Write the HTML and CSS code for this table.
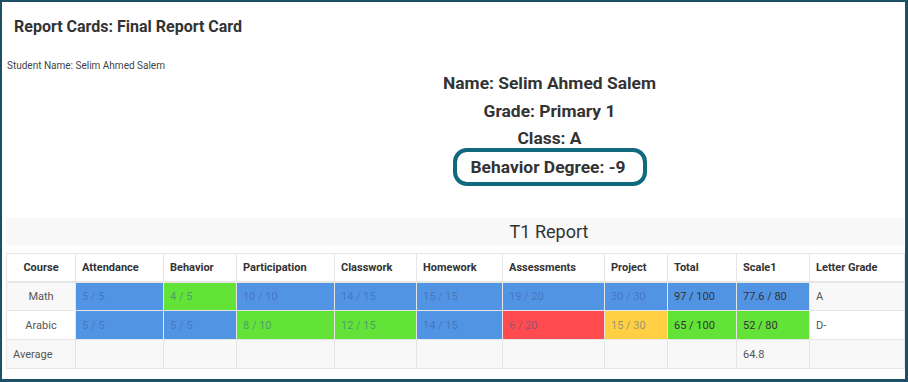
FILE: index.html
```html
<!DOCTYPE html>
<html lang="en">
<head>
<meta charset="utf-8">
<title>Report Cards: Final Report Card</title>
<link rel="stylesheet" href="styles.css">
</head>
<body>
<div class="frame">
  <h1 class="title">Report Cards: Final Report Card</h1>
  <p class="student">Student Name: Selim Ahmed Salem</p>
  <div class="info">
    <div class="info-line">Name: Selim Ahmed Salem</div>
    <div class="info-line">Grade: Primary 1</div>
    <div class="info-line">Class: A</div>
    <div class="info-line behavior-row"><span class="behavior-box">Behavior Degree: -9</span></div>
  </div>
  <div class="term-bar">T1 Report</div>
  <table class="grades">
    <colgroup>
      <col class="w1"><col class="w2"><col class="w3"><col class="w4"><col class="w5"><col class="w6"><col class="w7"><col class="w8"><col class="w9"><col class="w10"><col class="w11">
    </colgroup>
    <thead>
      <tr>
        <th class="course">Course</th>
        <th>Attendance</th>
        <th>Behavior</th>
        <th>Participation</th>
        <th>Classwork</th>
        <th>Homework</th>
        <th>Assessments</th>
        <th>Project</th>
        <th>Total</th>
        <th>Scale1</th>
        <th>Letter Grade</th>
      </tr>
    </thead>
    <tbody>
      <tr class="odd">
        <td class="course">Math</td>
        <td class="blue muted">5 / 5</td>
        <td class="green muted">4 / 5</td>
        <td class="blue muted">10 / 10</td>
        <td class="blue muted">14 / 15</td>
        <td class="blue muted">15 / 15</td>
        <td class="blue muted">19 / 20</td>
        <td class="blue muted">30 / 30</td>
        <td class="blue dark">97 / 100</td>
        <td class="blue dark">77.6 / 80</td>
        <td>A</td>
      </tr>
      <tr class="even">
        <td class="course">Arabic</td>
        <td class="blue muted">5 / 5</td>
        <td class="blue muted">5 / 5</td>
        <td class="green muted">8 / 10</td>
        <td class="green muted">12 / 15</td>
        <td class="blue muted">14 / 15</td>
        <td class="red muted">6 / 20</td>
        <td class="yellow muted">15 / 30</td>
        <td class="green dark">65 / 100</td>
        <td class="green dark">52 / 80</td>
        <td>D-</td>
      </tr>
      <tr class="odd">
        <td class="avg">Average</td>
        <td></td>
        <td></td>
        <td></td>
        <td></td>
        <td></td>
        <td></td>
        <td></td>
        <td></td>
        <td>64.8</td>
        <td></td>
      </tr>
    </tbody>
  </table>
</div>
</body>
</html>
```

FILE: styles.css
```css
html, body {
  margin: 0;
  padding: 0;
  background: #ffffff;
}

body {
  font-family: Roboto, "Liberation Sans", Arial, sans-serif;
  color: #333333;
}

.frame {
  box-sizing: border-box;
  width: 908px;
  height: 382px;
  border-style: solid;
  border-color: #1d4f66;
  border-width: 2px 3px 3px 2px;
  padding: 15px 1px 0 4px;
  overflow: hidden;
}

.title {
  margin: 0 0 0 8px;
  font-size: 16px;
  line-height: 20px;
  font-weight: 700;
  color: #333333;
}

.student {
  margin: 23px 0 0 1px;
  font-size: 10px;
  line-height: 12px;
  color: #444444;
}

.info {
  margin-top: -2px;
  padding-left: 189px;
  text-align: center;
}

.info-line {
  font-size: 17.4px;
  line-height: 27.5px;
  font-weight: 700;
  color: #333333;
}

.behavior-row {
  margin-top: -5px;
}

.behavior-box {
  display: inline-block;
  border: 4px solid #11697f;
  border-radius: 14px;
  padding: 2px 17px 1px 14px;
}

.term-bar {
  margin-top: 32px;
  height: 27px;
  line-height: 27px;
  background: #f8f8f8;
  font-size: 18px;
  color: #333333;
  text-align: center;
  padding-left: 188px;
}

.grades {
  margin-top: 8px;
  width: 898px;
  table-layout: fixed;
  border-collapse: collapse;
  font-size: 11px;
}

.grades col.w1 { width: 69px; }
.grades col.w2 { width: 88px; }
.grades col.w3 { width: 73px; }
.grades col.w4 { width: 98px; }
.grades col.w5 { width: 82px; }
.grades col.w6 { width: 86px; }
.grades col.w7 { width: 102px; }
.grades col.w8 { width: 63px; }
.grades col.w9 { width: 69px; }
.grades col.w10 { width: 73px; }
.grades col.w11 { width: 95px; }

.grades th,
.grades td {
  box-sizing: border-box;
  border: 1px solid #e6e6e6;
  height: 29px;
  padding: 0 6px;
  text-align: left;
  vertical-align: middle;
  white-space: nowrap;
  overflow: hidden;
}

.grades th {
  font-weight: 700;
  color: #333333;
  background: #ffffff;
  border-bottom-width: 2px;
  height: 28px;
}

.grades td {
  color: #555555;
}

.grades .course {
  text-align: center;
}

.grades tr.odd td {
  background: #f8f8f8;
}

.grades tr.even td {
  background: #ffffff;
}

.grades tr td.blue { background: #5294e4; }
.grades tr td.green { background: #63e338; }
.grades tr td.red { background: #ff4a4f; }
.grades tr td.yellow { background: #ffd043; }

.grades td.muted {
  color: rgba(55, 95, 155, 0.55);
}

.grades td.dark {
  color: #333333;
}
```
